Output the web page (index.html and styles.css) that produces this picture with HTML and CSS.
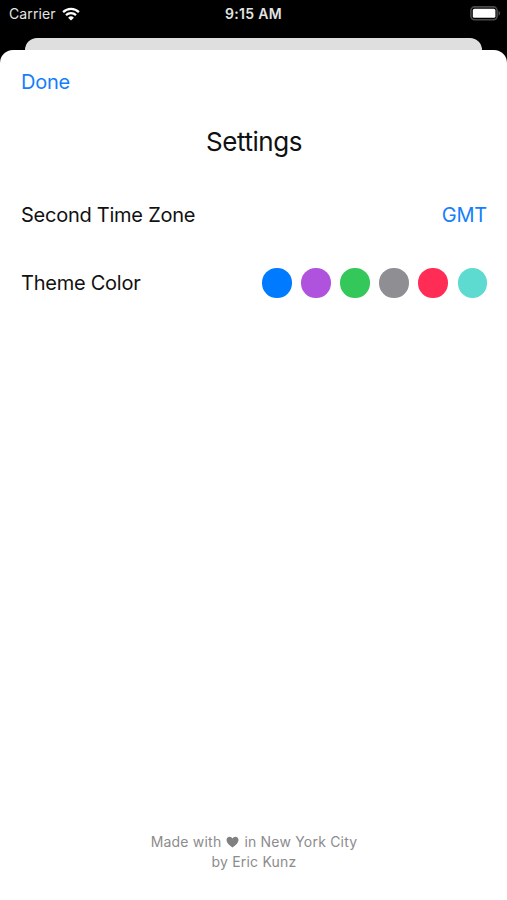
FILE: index.html
```html
<!DOCTYPE html>
<html lang="en">
<head>
    <meta charset="UTF-8">
    <title>Settings</title>
    <link rel="stylesheet" href="styles.css">
</head>
<body>
    <header class="status-bar">
        <div class="carrier">
            <span>Carrier</span>
            <svg class="wifi" viewBox="0 0 18 14" width="18" height="14">
                <path d="M1.1 5.1a11.4 11.4 0 0 1 15.8 0" />
                <path d="M4 8.2a7.2 7.2 0 0 1 10 0" />
                <path class="wifi-dot" d="M9 13.6l-2.9-2.9a4.2 4.2 0 0 1 5.8 0z" />
            </svg>
        </div>
        <div class="clock">9:15 AM</div>
        <svg class="battery" viewBox="0 0 31 15" width="31" height="15">
            <rect class="battery-case" x=".9" y=".9" width="26.2" height="12.8" rx="3.6" />
            <rect class="battery-level" x="2.8" y="2.8" width="22.6" height="9" rx="1.6" />
            <path class="battery-tip" d="M28.5 5c2.2.6 2.2 4 0 4.6z" />
        </svg>
    </header>

    <div class="back-sheet"></div>

    <main class="sheet">
        <button class="done">Done</button>
        <h1>Settings</h1>

        <div class="row">
            <span class="time-zone">Second Time Zone</span>
            <button class="zone">GMT</button>
        </div>

        <div class="row theme-row">
            <span class="theme">Theme Color</span>
            <div class="colors">
                <span class="dot blue"></span>
                <span class="dot purple"></span>
                <span class="dot green"></span>
                <span class="dot gray"></span>
                <span class="dot red"></span>
                <span class="dot teal"></span>
            </div>
        </div>

        <footer>
            <div class="made-with">
                <span>Made with</span>
                <svg class="heart" viewBox="0 0 13 12" width="13" height="12">
                    <path d="M6.5 11.5C3.2 9.3.5 7 .5 4.1.5 2.2 1.8.8 3.5.8c1.3 0 2.3.7 3 1.8.7-1.1 1.7-1.8 3-1.8 1.7 0 3 1.4 3 3.3 0 2.9-2.7 5.2-6 7.4z" />
                </svg>
                <span>in New York City</span>
            </div>
            <div class="author">by Eric Kunz</div>
        </footer>
    </main>
</body>
</html>
```
FILE: styles.css
```css
body {
    margin: 0;
    height: 900px;
    display: flex;
    flex-direction: column;
    background: #000;
    color: #111;
    font-family: Inter, "Liberation Sans", sans-serif;
}

.status-bar {
    display: grid;
    grid-template-columns: 1fr auto 1fr;
    align-items: center;
    height: 27px;
    padding: 0 6px;
    margin-bottom: 11px;
    color: #e4e4e4;
    font-size: 14px;
}

.carrier {
    display: flex;
    align-items: center;
    gap: 6px;
    padding-left: 3px;
    letter-spacing: 0.1px;
}

.clock {
    letter-spacing: 0.35px;
    font-weight: 600;
}

.wifi {
    fill: none;
    stroke: #fff;
    stroke-width: 2.3;
}

.wifi .wifi-dot {
    fill: #fff;
    stroke: none;
}

.battery {
    justify-self: end;
}

.battery-case {
    fill: none;
    stroke: #4a4a4a;
    stroke-width: 1.6;
}

.battery-level {
    fill: #fff;
}

.battery-tip {
    fill: #4a4a4a;
}

.back-sheet {
    height: 12px;
    margin: 0 25px;
    background: #dfdfdf;
    border-radius: 12px 12px 0 0;
}

.sheet {
    flex: 1;
    display: flex;
    flex-direction: column;
    padding: 18px 20px 28px 21px;
    background: #fff;
    border-radius: 13px 13px 0 0;
}

button {
    padding: 0;
    border: none;
    background: none;
    color: #147efb;
    font: inherit;
    letter-spacing: inherit;
    cursor: pointer;
}

.done {
    align-self: flex-start;
    font-size: 20px;
    letter-spacing: -0.25px;
    line-height: 28px;
}

h1 {
    margin: 28px 0 0;
    font-size: 26px;
    font-weight: 400;
    letter-spacing: -0.45px;
    line-height: 36px;
    text-align: center;
}

.row {
    display: flex;
    align-items: center;
    justify-content: space-between;
    height: 30px;
    margin-top: 40px;
    font-size: 20px;
    letter-spacing: -0.25px;
}

.theme-row {
    margin-top: 38px;
}

.colors {
    display: flex;
    gap: 9.6px;
}

.dot {
    width: 29.5px;
    height: 29.5px;
    border-radius: 50%;
}

.blue { background: #007aff; }
.purple { background: #af52de; }
.green { background: #34c759; }
.gray { background: #8e8e93; }
.red { background: #ff2d55; }
.teal { background: #5edbd0; }

footer {
    margin-top: auto;
    color: #8c8c8c;
    font-size: 14px;
    letter-spacing: 0.2px;
    line-height: 20px;
    text-align: center;
}

.made-with {
    display: flex;
    align-items: center;
    justify-content: center;
    gap: 5px;
}

.heart {
    fill: #808080;
}
```
